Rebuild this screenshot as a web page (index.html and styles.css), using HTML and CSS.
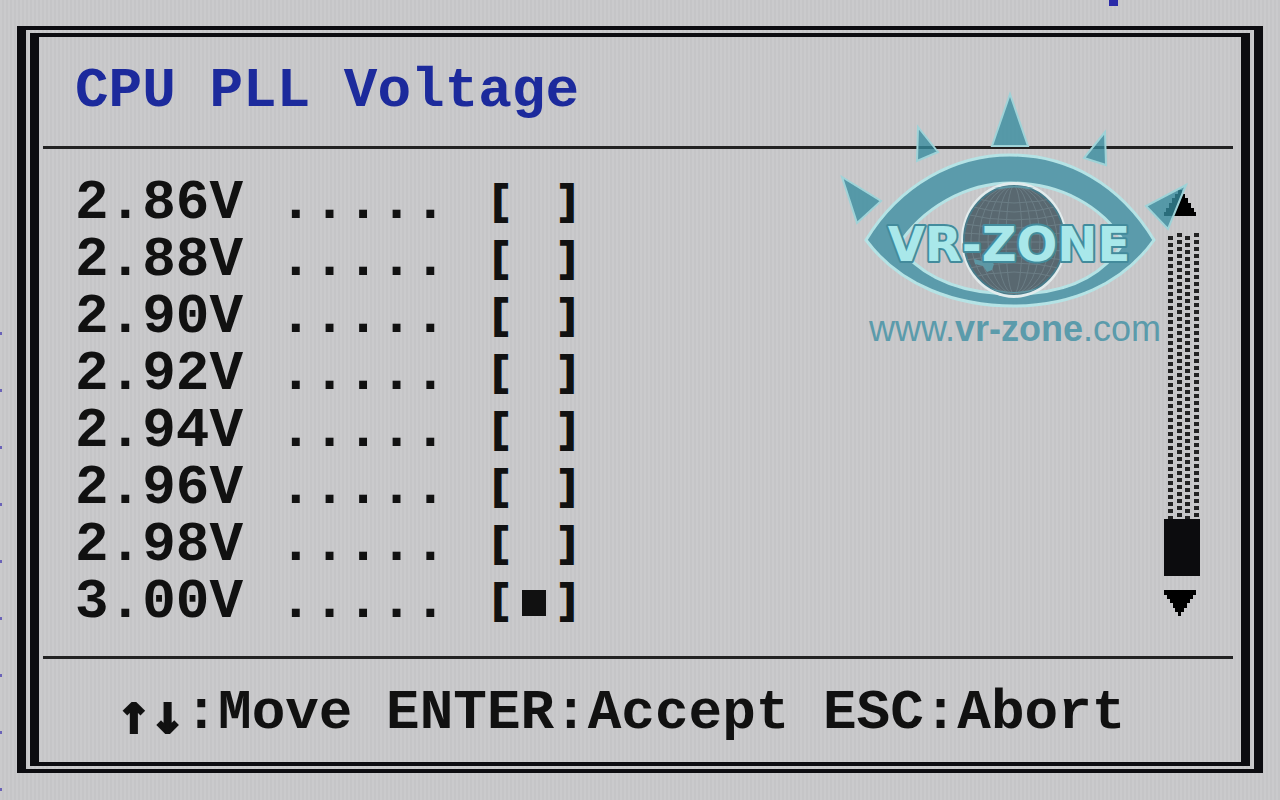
FILE: index.html
```html
<!DOCTYPE html>
<html lang="en">

<head>
    <meta charset="UTF-8">
    <meta name="viewport" content="width=device-width, initial-scale=1.0">
    <title>CPU PLL Voltage</title>
    <link rel="stylesheet" href="styles.css">
</head>

<body>
    <!-- bits of the menu behind the dialog -->
    <div class="behind-top"></div>
    <div class="behind-left"></div>

    <main class="dialog">
        <form class="dialog-inner">
            <header>
                <h1>CPU PLL Voltage</h1>
            </header>

            <section class="content">
                <div class="options">
                    <label class="option">2.86V<span class="dots">.....</span><span class="bracket">[</span><input type="radio" name="voltage" value="2.86"><span class="bracket">]</span></label>
                    <label class="option">2.88V<span class="dots">.....</span><span class="bracket">[</span><input type="radio" name="voltage" value="2.88"><span class="bracket">]</span></label>
                    <label class="option">2.90V<span class="dots">.....</span><span class="bracket">[</span><input type="radio" name="voltage" value="2.90"><span class="bracket">]</span></label>
                    <label class="option">2.92V<span class="dots">.....</span><span class="bracket">[</span><input type="radio" name="voltage" value="2.92"><span class="bracket">]</span></label>
                    <label class="option">2.94V<span class="dots">.....</span><span class="bracket">[</span><input type="radio" name="voltage" value="2.94"><span class="bracket">]</span></label>
                    <label class="option">2.96V<span class="dots">.....</span><span class="bracket">[</span><input type="radio" name="voltage" value="2.96"><span class="bracket">]</span></label>
                    <label class="option">2.98V<span class="dots">.....</span><span class="bracket">[</span><input type="radio" name="voltage" value="2.98"><span class="bracket">]</span></label>
                    <label class="option">3.00V<span class="dots">.....</span><span class="bracket">[</span><input type="radio" name="voltage" value="3.00" checked><span class="bracket">]</span></label>
                </div>

                <div class="scrollbar">
                    <button type="button" class="arrow" aria-label="Scroll up">
                        <svg width="32" height="26" viewBox="0 0 32 26"><path d="M14 0h4v4h3v4h3v5h3v5h3v4h2v4H0v-4h2v-4h3v-5h3V8h3V4h3z"/></svg>
                    </button>
                    <div class="track">
                        <svg width="32" height="100%">
                            <defs>
                                <pattern id="shade" width="17" height="7" patternUnits="userSpaceOnUse">
                                    <rect x="0" y="3" width="5" height="4"/>
                                    <rect x="9" y="0" width="5" height="4"/>
                                </pattern>
                            </defs>
                            <rect width="32" height="100%" fill="url(#shade)"/>
                        </svg>
                    </div>
                    <div class="thumb"></div>
                    <button type="button" class="arrow" aria-label="Scroll down">
                        <svg width="32" height="26" viewBox="0 0 32 26"><path d="M0 0h32v5h-3v4h-3v4h-3v5h-3v4h-3v4h-3v-4h-3v-4H9v-5H6V9H3V5H0z"/></svg>
                    </button>
                </div>
            </section>

            <footer><span class="keys">↑↓</span>:Move ENTER:Accept ESC:Abort</footer>
        </form>

        <svg class="watermark" width="370" height="270" viewBox="830 85 370 270">
            <defs>
                <clipPath id="globeClip"><ellipse cx="1014" cy="240" rx="50" ry="54"/></clipPath>
            </defs>
            <g class="spikes">
                <path d="M1010 94l18 52h-36z"/>
                <path d="M918 127l20 25-21 9z"/>
                <path d="M842 177l39 24-24 22z"/>
                <path d="M1105 132l1 33-22-7z"/>
                <path d="M1186 185l-18 44-22-23z"/>
            </g>
            <path class="eye" fill-rule="evenodd" d="M866 240C900 184 955 155 1010 155C1068 155 1120 184 1154 240C1122 285 1070 306 1014 306C956 306 900 286 866 240zM898 246C922 208 966 183 1011 183C1060 183 1102 206 1124 242C1102 278 1064 294 1014 294C964 294 924 280 898 246z"/>
            <ellipse class="ring" cx="1014" cy="240" rx="53" ry="58"/>
            <ellipse class="globe" cx="1014" cy="240" rx="50" ry="54"/>
            <g class="grid" clip-path="url(#globeClip)">
                <ellipse cx="1014" cy="240" rx="8" ry="54"/>
                <ellipse cx="1014" cy="240" rx="17" ry="54"/>
                <ellipse cx="1014" cy="240" rx="26" ry="54"/>
                <ellipse cx="1014" cy="240" rx="35" ry="54"/>
                <ellipse cx="1014" cy="240" rx="43" ry="54"/>
                <path d="M964 196q50 14 100 0M964 205q50 14 100 0M964 214q50 12 100 0M964 224q50 8 100 0M964 233q50 4 100 0M964 242h100M964 251q50-4 100 0M964 260q50-8 100 0M964 269q50-12 100 0M964 279q50-14 100 0"/>
            </g>
            <path class="land" d="M974 259l8 2 6-3 6 6-2 6-5 2-4-6-8-2zM994 188q20-4 40 0l-6 1q-14-3-28 0zM990 288q24 8 48 0l-6 3q-18 4-36 0z"/>
            <text class="logo-name" x="1009" y="261" text-anchor="middle">VR-ZONE</text>
            <text class="logo-url" x="1015" y="341" text-anchor="middle">www.<tspan class="strong">vr-zone</tspan>.com</text>
        </svg>
    </main>
</body>

</html>
```
FILE: styles.css
```css
* {
    box-sizing: border-box;
}

body {
    margin: 0;
    min-height: 100vh;
    display: flex;
    padding: 26px 17px 27px;
    position: relative;
    overflow: hidden;
    font-family: 'Liberation Mono', monospace;
    font-weight: bold;
    font-size: 56px;
    line-height: 57px;
    color: #111;
    background: repeating-linear-gradient(90deg, #cacacc 0 2px, #c5c5c7 2px 4px);
}

.dialog {
    flex: 1;
    display: flex;
    position: relative;
    border: solid #0c0c10;
    border-width: 4px 9px;
    padding: 3px 4px;
}

.dialog-inner {
    flex: 1;
    display: flex;
    flex-direction: column;
    border: solid #0c0c10;
    border-width: 4px 9px;
}

header,
footer {
    margin: 0 8px 0 4px;
}

header {
    padding: 26px 32px;
    border-bottom: 3px solid #222;
}

h1 {
    margin: 0;
    font-size: 56px;
    line-height: 57px;
    color: #1c2a9c;
}

.content {
    flex: 1;
    display: flex;
    justify-content: space-between;
    padding: 26px 41px 22px 36px;
}

.options {
    display: flex;
    flex-direction: column;
}

.option {
    display: flex;
    align-items: center;
    height: 57px;
    white-space: pre;
}

.dots {
    margin: 0 36px;
}

.bracket {
    width: 34px;
    font-size: 40px;
    text-align: center;
    -webkit-text-stroke: 2px #111;
}

.option input {
    appearance: none;
    width: 24px;
    height: 26px;
    margin: 0 5px;
}

.option input:checked {
    background: #111;
}

.scrollbar {
    width: 36px;
    display: flex;
    flex-direction: column;
    padding: 15px 0 18px;
}

.arrow {
    height: 26px;
    padding: 0;
    border: none;
    background: none;
    text-align: left;
}

.arrow svg {
    display: block;
}

.track {
    flex: 1;
    height: 0;
    margin: 17px 0 0 4px;
    overflow: hidden;
}

.track svg {
    display: block;
    fill: #222;
}

.thumb {
    height: 57px;
    margin-bottom: 14px;
    background: #0c0c0e;
}

footer {
    display: flex;
    padding: 26px 0 20px 74px;
    border-top: 3px solid #222;
    white-space: pre;
}

.keys {
    font-family: 'DejaVu Sans Mono', monospace;
    -webkit-text-stroke: 2px #111;
}

.watermark {
    position: absolute;
    top: 55px;
    right: 54px;
}

.spikes {
    fill: rgba(54, 140, 158, 0.78);
    stroke: #9fd3d8;
    stroke-width: 2px;
}

.eye {
    fill: #5b9bab;
    stroke: #b5e3e5;
    stroke-width: 3px;
}

.ring {
    fill: #e2eced;
}

.globe {
    fill: #596870;
    stroke: #477b8a;
    stroke-width: 2px;
}

.grid {
    fill: none;
    stroke: #6b7d85;
    stroke-width: 1px;
}

.land {
    fill: #5d98a5;
}

.logo-name {
    font-family: 'DejaVu Sans', sans-serif;
    font-size: 48px;
    fill: #a9e8ea;
    stroke: #438b9c;
    stroke-width: 4px;
    stroke-linejoin: round;
    paint-order: stroke;
}

.logo-url {
    font-family: 'Liberation Sans', sans-serif;
    font-size: 36px;
    font-weight: normal;
    fill: #5b9bab;
}

.logo-url .strong {
    font-weight: bold;
}

.behind-top {
    position: absolute;
    top: 0;
    right: 162px;
    width: 9px;
    height: 6px;
    background: #2a2aa8;
}

.behind-left {
    position: absolute;
    top: 332px;
    bottom: 0;
    left: 0;
    width: 2px;
    background: repeating-linear-gradient(#6a62b8 0 3px, transparent 3px 57px);
}
```
